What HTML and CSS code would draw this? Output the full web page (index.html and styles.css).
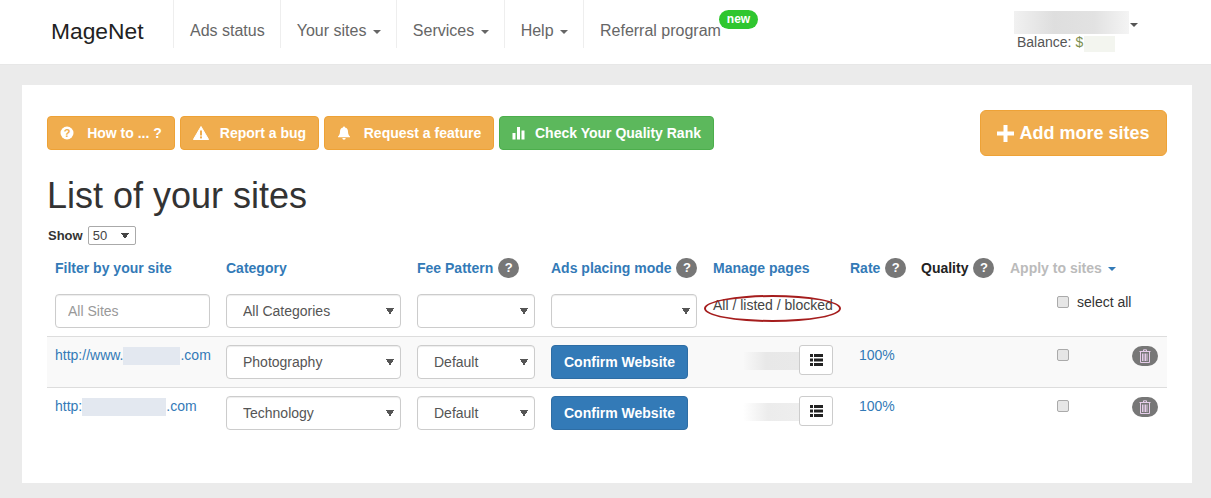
FILE: index.html
```html
<!DOCTYPE html>
<html lang="en">
<head>
<meta charset="utf-8">
<title>MageNet - List of your sites</title>
<link rel="stylesheet" href="styles.css">
</head>
<body>
<nav class="topbar">
  <a class="brand">MageNet</a>
  <ul class="menu">
    <li class="menu-item">Ads status</li>
    <li class="menu-item">Your sites <span class="caret"></span></li>
    <li class="menu-item">Services <span class="caret"></span></li>
    <li class="menu-item">Help <span class="caret"></span></li>
    <li class="menu-item menu-referral">Referral program<span class="new-badge">new</span></li>
  </ul>
  <div class="account">
    <div class="account-name"><span class="blur-name"></span><span class="caret caret-dark"></span></div>
    <div class="balance">Balance: <span class="dollar">$</span><span class="blur-balance"></span></div>
  </div>
</nav>

<main class="card">
  <div class="toolbar">
    <div class="toolbar-left">
      <a class="btn btn-orange btn-how">
        <svg class="ico" width="14" height="14" viewBox="0 0 14 14"><circle cx="7" cy="7" r="6.5" fill="#fff"/><text x="7" y="11" text-anchor="middle" class="ico-q">?</text></svg>
        How to ... ?</a>
      <a class="btn btn-orange btn-bug">
        <svg class="ico ico-warn" width="16" height="14" viewBox="0 0 16 14"><path d="M8 0.5 15.6 13.5H0.4Z" fill="#fff" stroke="#fff" stroke-linejoin="round"/><rect x="7" y="4.5" width="2" height="5" fill="#f0ad4e"/><rect x="7" y="10.4" width="2" height="2" fill="#f0ad4e"/></svg>
        Report a bug</a>
      <a class="btn btn-orange btn-feature">
        <svg class="ico" width="14" height="14" viewBox="0 0 14 14"><path d="M7 0.5c.6 0 1 .4 1 1 2.2.4 3 2 3 4.2 0 2.4.8 3.6 2 4.8v.8H1v-.8c1.200-1.200 2-2.400 2-4.800 0-2.200.8-3.800 3-4.200 0-.6.4-1 1-1Z" fill="#fff"/><path d="M5.300 12h3.400a1.700 1.700 0 0 1-3.400 0Z" fill="#fff"/></svg>
        Request a feature</a>
      <a class="btn btn-green">
        <svg class="ico-bars" width="14" height="14" viewBox="0 0 14 14"><rect x="0.500" y="7" width="3" height="6.500" fill="#fff"/><rect x="5" y="1" width="3" height="12.500" fill="#fff"/><rect x="9.500" y="4.500" width="3" height="9" fill="#fff"/></svg>
        Check Your Quality Rank</a>
    </div>
    <a class="btn btn-orange btn-add">
      <svg class="ico-plus" width="17" height="17" viewBox="0 0 17 17"><path d="M6.500 0h4v6.500H17v4h-6.500V17h-4v-6.500H0v-4h6.500Z" fill="#fff"/></svg>
      Add more sites</a>
  </div>

  <h1 class="title">List of your sites</h1>
  <div class="show-row">
    <b class="show-label">Show</b>
    <select class="show-select"><option>50</option></select>
  </div>

  <table class="sites">
    <colgroup>
      <col class="c1"><col class="c2"><col class="c3"><col class="c4"><col class="c5"><col class="c6"><col class="c7"><col class="c8">
    </colgroup>
    <thead>
      <tr class="head-row">
        <th><a>Filter by your site</a></th>
        <th><a>Category</a></th>
        <th><a>Fee Pattern</a> <span class="help">?</span></th>
        <th><a>Ads placing mode</a> <span class="help">?</span></th>
        <th><a>Manage pages</a></th>
        <th><a>Rate</a> <span class="help">?</span></th>
        <th class="th-dark">Quality <span class="help">?</span></th>
        <th class="th-muted">Apply to sites <span class="caret caret-blue"></span></th>
      </tr>
      <tr class="filter-row">
        <td><input class="field input-sites" type="text" placeholder="All Sites"></td>
        <td><select class="field sel-cat"><option>All Categories</option></select></td>
        <td><select class="field sel-fee"><option></option></select></td>
        <td><select class="field sel-mode"><option></option></select></td>
        <td class="td-filter"><span class="pages-filter">All / listed / blocked<span class="ring"></span></span></td>
        <td></td>
        <td></td>
        <td class="td-apply"><label class="select-all"><input class="check" type="checkbox">select all</label></td>
      </tr>
    </thead>
    <tbody>
      <tr class="site-row striped">
        <td><a class="link">http://www.<span class="blur-url w1"></span>.com</a></td>
        <td><select class="field sel-cat"><option>Photography</option></select></td>
        <td><select class="field sel-fee"><option>Default</option></select></td>
        <td><a class="btn btn-blue">Confirm Website</a></td>
        <td><div class="pages"><span class="blur-pages"></span><a class="btn-list"><svg width="13" height="12" viewBox="0 0 13 12"><path d="M0 0h3v3H0ZM4 0h9v3H4ZM0 4.500h3v3H0ZM4 4.500h9v3H4ZM0 9h3v3H0ZM4 9h9v3H4Z" fill="#222"/></svg></a></div></td>
        <td class="td-rate"><a class="link">100%</a></td>
        <td></td>
        <td class="td-actions"><div class="actions"><input class="check" type="checkbox"><a class="trash"><svg width="12" height="14" viewBox="0 0 12 14"><path d="M4.500 2V.8h3V2M.5 2.500h11M1.500 2.500v11h9v-11M3.500 4.500v7.500M5 4.500v7.500M6.500 4.500v7.500M8 4.500v7.500" fill="none" stroke="#e6cdea" stroke-width="1"/></svg></a></div></td>
      </tr>
      <tr class="site-row">
        <td><a class="link">http:<span class="blur-url w2"></span>.com</a></td>
        <td><select class="field sel-cat"><option>Technology</option></select></td>
        <td><select class="field sel-fee"><option>Default</option></select></td>
        <td><a class="btn btn-blue">Confirm Website</a></td>
        <td><div class="pages"><span class="blur-pages wide"></span><a class="btn-list"><svg width="13" height="12" viewBox="0 0 13 12"><path d="M0 0h3v3H0ZM4 0h9v3H4ZM0 4.500h3v3H0ZM4 4.500h9v3H4ZM0 9h3v3H0ZM4 9h9v3H4Z" fill="#222"/></svg></a></div></td>
        <td class="td-rate"><a class="link">100%</a></td>
        <td></td>
        <td class="td-actions"><div class="actions"><input class="check" type="checkbox"><a class="trash"><svg width="12" height="14" viewBox="0 0 12 14"><path d="M4.500 2V.8h3V2M.5 2.500h11M1.500 2.500v11h9v-11M3.500 4.500v7.500M5 4.500v7.500M6.500 4.500v7.500M8 4.500v7.500" fill="none" stroke="#e6cdea" stroke-width="1"/></svg></a></div></td>
      </tr>
    </tbody>
  </table>
</main>
</body>
</html>
```

FILE: styles.css
```css
* { box-sizing: border-box; }

html, body { margin: 0; padding: 0; }

body {
  background: #ebebeb;
  color: #333;
  font-family: "Liberation Sans", Arial, sans-serif;
  font-size: 14px;
  line-height: 20px;
  overflow: hidden;
}

/* Top bar */
.topbar {
  display: flex;
  height: 65px;
  background: #fff;
  border-bottom: 1px solid #e7e7e7;
}

.brand {
  flex: none;
  width: 173px;
  padding: 19px 0 0 51px;
  font-size: 22.800px;
  line-height: 24px;
  color: #222;
}

.menu {
  display: flex;
  flex: none;
  align-items: flex-start;
  list-style: none;
  margin: 0;
  padding: 0;
}

.menu-item {
  position: relative;
  height: 48px;
  padding: 21px 15px 7px 16px;
  border-left: 1px solid #eee;
  font-size: 16px;
  color: #666;
  white-space: nowrap;
}

.menu-referral { padding-right: 0; }

.caret {
  display: inline-block;
  width: 0;
  height: 0;
  margin-left: 2px;
  vertical-align: middle;
  border-top: 4px solid #666;
  border-left: 4px solid transparent;
  border-right: 4px solid transparent;
}

.caret-dark { flex: none; border-top-color: #555; margin: 12px 0 0 1px; vertical-align: top; }
.caret-blue { border-top-color: #337ab7; }

.new-badge {
  position: absolute;
  left: 135px;
  top: 10px;
  width: 39px;
  height: 19px;
  border-radius: 10px;
  background: #2fc62f;
  color: #fff;
  font-size: 12px;
  font-weight: bold;
  line-height: 18px;
  text-align: center;
}

.account {
  flex: none;
  width: 124px;
  margin-left: auto;
  margin-right: 73px;
  padding-top: 11px;
}

.account-name { display: flex; align-items: flex-start; height: 23px; }

.blur-name {
  display: block;
  flex: none;
  width: 115px;
  height: 23px;
  background: linear-gradient(to right, #f1f1f1, #dedede 35%, #e2e2e2 70%, #f4f4f4);
}

.balance {
  margin-top: -2px;
  padding-left: 3px;
  line-height: 20px;
  color: #555;
  white-space: nowrap;
}

.dollar { color: #7d8f4f; }

.blur-balance {
  display: inline-block;
  width: 31px;
  height: 16px;
  margin-left: 1px;
  vertical-align: -5px;
  background: #f3f5ef;
}

/* Card */
.card {
  width: 1170px;
  height: 398px;
  margin: 20px 0 0 22px;
  padding: 25px;
  background: #fff;
}

.toolbar {
  display: flex;
  align-items: center;
  justify-content: space-between;
  height: 46px;
}

.toolbar-left { display: flex; gap: 5px; }

.btn {
  display: inline-flex;
  align-items: center;
  justify-content: center;
  height: 34px;
  border-radius: 4px;
  border: 1px solid transparent;
  color: #fff;
  font-size: 14px;
  font-weight: bold;
}

.btn-orange { background: #f0ad4e; border-color: #eea236; }
.btn-green { background: #5cb85c; border-color: #4cae4c; width: 215px; }
.btn-blue { background: #337ab7; border-color: #2e6da4; width: 137px; }

.btn-how { width: 128px; }
.btn-bug { width: 139px; }
.btn-feature { width: 170px; }

.ico { margin-right: 13px; }
.ico-warn { margin-right: 11px; }
.ico-bars { margin-right: 9px; }
.ico-q { fill: #f0ad4e; font: bold 11px "Liberation Sans", Arial, sans-serif; }

.btn-add {
  width: 187px;
  height: 46px;
  border-radius: 6px;
  font-size: 18px;
}

.ico-plus { margin-right: 5px; }

.title {
  margin: 20px 0 10px;
  font-size: 36px;
  font-weight: 500;
  line-height: 40px;
  color: #333;
}

.show-row {
  display: flex;
  align-items: center;
  gap: 5px;
  height: 19px;
  margin-bottom: 5px;
}

.show-label { font-size: 13px; margin-left: 1px; color: #333; }

.show-select {
  appearance: none;
  width: 48px;
  height: 19px;
  padding: 0 0 0 4px;
  border: 1px solid #aaa;
  border-radius: 2px;
  color: #444;
  font: 13px "Liberation Sans", Arial, sans-serif;
  background-color: #fff;
  background-image: linear-gradient(to top right, transparent 50%, #444 50%), linear-gradient(to top left, transparent 50%, #444 50%);
  background-size: 4px 6px;
  background-repeat: no-repeat;
  background-position: right 10px center, right 6px center;
}

/* Table */
.sites {
  width: 1120px;
  border-collapse: collapse;
  table-layout: fixed;
}

.c1 { width: 171px; }
.c2 { width: 191px; }
.c3 { width: 134px; }
.c4 { width: 162px; }
.c5 { width: 137px; }
.c6 { width: 71px; }
.c7 { width: 89px; }
.c8 { width: 165px; }

.sites th, .sites td {
  padding: 8px;
  vertical-align: top;
  text-align: left;
  white-space: nowrap;
}

.sites th a { color: #337ab7; }

.th-dark { color: #222; }
.th-muted { color: #bbb; }

.help {
  display: inline-block;
  width: 21px;
  height: 20px;
  margin-left: 1px;
  border-radius: 10px;
  background: #777;
  color: #fff;
  font-size: 13px;
  line-height: 20px;
  text-align: center;
  vertical-align: top;
}

.field {
  display: block;
  height: 34px;
  border: 1px solid #ccc;
  border-radius: 4px;
  color: #555;
  font: 14px "Liberation Sans", Arial, sans-serif;
  padding: 6px 12px;
  box-shadow: inset 0 1px 1px rgba(0,0,0,.075);
  background-color: #fff;
}

select.field {
  appearance: none;
  padding-left: 16px;
  background-image: linear-gradient(to top right, transparent 50%, #555 50%), linear-gradient(to top left, transparent 50%, #555 50%);
  background-size: 4px 7px;
  background-repeat: no-repeat;
  background-position: right 10px center, right 6px center;
}

.input-sites { width: 155px; }
.input-sites::placeholder { color: #999; }
.sel-cat { width: 175px; }
.sel-fee { width: 118px; }
.sel-mode { width: 146px; }

.sites .td-filter { padding-top: 9px; }

.pages-filter {
  position: relative;
  display: inline-block;
  color: #444;
}

.ring {
  position: absolute;
  left: -9px;
  top: 0;
  width: 137px;
  height: 27px;
  border: 2px solid #a51d1d;
  border-radius: 50%;
}

.sites .td-apply { padding-left: 55px; padding-top: 6px; }

.select-all { display: flex; align-items: center; gap: 8px; color: #333; }

.check {
  appearance: none;
  display: block;
  flex: none;
  width: 12px;
  height: 12px;
  margin: 0;
  border: 1px solid #aaa;
  border-radius: 2px;
  background: #e6e6e6;
}

.site-row td { border-top: 1px solid #ddd; }
.striped td { background: #f9f9f9; }

.link { color: #337ab7; }

.blur-url {
  display: inline-block;
  height: 18px;
  vertical-align: -5px;
  background: #e3e8f0;
}

.w1 { width: 57px; }
.w2 { width: 84px; }

.pages {
  display: flex;
  justify-content: flex-end;
  padding-right: 1px;
}

.blur-pages {
  display: block;
  width: 55px;
  height: 18px;
  margin-top: 7px;
  background: linear-gradient(to right, #f8f8f8, #e8e8e8 40%, #e9e9e9);
}

.blur-pages.wide { width: 56px; background: linear-gradient(to right, #fff, #ececec 45%, #eee); }

.btn-list {
  display: flex;
  align-items: center;
  justify-content: center;
  width: 34px;
  height: 30px;
  border: 1px solid #ccc;
  border-radius: 3px;
  background: #fff;
}

.sites .td-rate { padding-left: 17px; }

.sites .td-actions {
  padding-left: 55px;
  padding-right: 9px;
}

.actions {
  display: flex;
  justify-content: space-between;
}

.actions > .check { margin-top: 4px; }

.trash {
  display: flex;
  align-items: center;
  justify-content: center;
  width: 26px;
  height: 20px;
  margin-top: 1px;
  border-radius: 10px;
  background: #777;
}
```
